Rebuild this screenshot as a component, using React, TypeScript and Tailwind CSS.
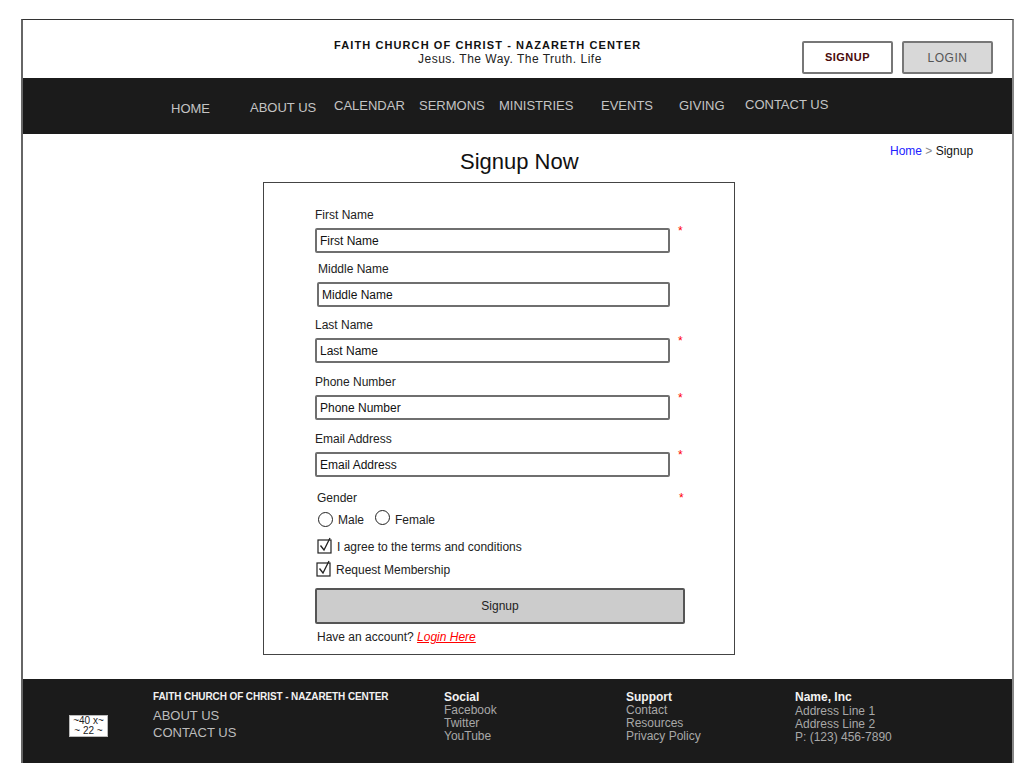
import React from "react";

const font = { fontFamily: '"Liberation Sans", Arial, sans-serif' };

function Star({ className = "" }: { className?: string }) {
  return <span className={`text-[12px] leading-none text-[#ff0000] ${className}`}>*</span>;
}

function Field({ label, labelClass, inputClass, required }: { label: string; labelClass: string; inputClass: string; required?: boolean }) {
  return (
    <div>
      <div className={`h-[14px] text-[12px] leading-[14px] text-[#222] ${labelClass}`}>{label}</div>
      <div className="mt-[6px] flex items-start">
        <div className={`flex h-[25px] items-center rounded-[2px] border-2 border-[#6f6f6f] bg-white px-[3px] text-[12px] text-[#111] ${inputClass}`}>
          {label}
        </div>
        {required && <Star className="ml-[8px] -mt-[3px]" />}
      </div>
    </div>
  );
}

function Check() {
  return (
    <svg width="16" height="17" viewBox="0 0 16 17" className="shrink-0">
      <rect x="1" y="3" width="13" height="13" fill="white" stroke="#222" strokeWidth="1.2" />
      <path d="M3.5 8.5 L7 13 L13 1" fill="none" stroke="#222" strokeWidth="1.3" />
    </svg>
  );
}

function Radio() {
  return <span className="inline-block h-[15px] w-[15px] rounded-full border border-[#222] bg-white" />;
}

export default function App() {
  return (
    <div className="min-h-[780px] bg-white pt-[19px]" style={font}>
      <div className="ml-[21px] w-[993px] border-l-2 border-r-2 border-t border-l-[#666] border-r-[#888] border-t-[#333]">
        {/* header */}
        <div className="flex h-[58px] items-start bg-white">
          <div className="w-[311px] shrink-0" />
          <div className="mt-[19px] flex w-[320px] flex-col">
            <div className="whitespace-nowrap text-[11px] font-bold leading-[13px] tracking-[1.1px] text-[#111]">FAITH CHURCH OF CHRIST - NAZARETH CENTER</div>
            <div className="ml-[84px] whitespace-nowrap text-[12px] leading-[14px] tracking-[0.5px] text-[#222]">Jesus. The Way. The Truth. Life</div>
          </div>
          <div className="ml-[148px] mt-[21px] flex gap-[9px]">
            <div className="flex h-[33px] w-[91px] items-center justify-center rounded-[2px] border-2 border-[#777] bg-white text-[11px] font-bold tracking-[0.5px] text-[#4a0a0a]">
              SIGNUP
            </div>
            <div className="flex h-[33px] w-[91px] items-center justify-center rounded-[2px] border-2 border-[#777] bg-[#d8d8d8] text-[12px] tracking-[0.5px] text-[#555]">
              LOGIN
            </div>
          </div>
        </div>

        {/* nav */}
        <div className="flex h-[56px] items-start bg-[#1b1b1b] text-[13px] leading-[15px] text-[#c4c4c4]">
          <div className="ml-[148px] mt-[23px] w-[79px]">HOME</div>
          <div className="mt-[22px] w-[84px]">ABOUT US</div>
          <div className="mt-[20px] w-[85px]">CALENDAR</div>
          <div className="mt-[20px] w-[80px]">SERMONS</div>
          <div className="mt-[20px] w-[102px]">MINISTRIES</div>
          <div className="mt-[20px] w-[78px]">EVENTS</div>
          <div className="mt-[20px] w-[66px]">GIVING</div>
          <div className="mt-[19px]">CONTACT US</div>
        </div>

        {/* body */}
        <div className="h-[545px] bg-white">
          <div className="flex h-[48px] items-start">
            <div className="ml-[437px] mt-[15px] w-[430px] text-[22px] leading-[26px] text-[#111]">Signup Now</div>
            <div className="mt-[10px] text-[12px] leading-[14px]">
              <span className="text-[#2222ff]">Home</span>
              <span className="text-[#888]"> &gt; </span>
              <span className="text-[#111]">Signup</span>
            </div>
          </div>

          <div className="ml-[240px] h-[473px] w-[472px] border border-[#444] pl-[51px] pt-[25px]">
            <Field label="First Name" labelClass="" inputClass="w-[355px]" required />
            <div className="mt-[9px]">
              <Field label="Middle Name" labelClass="ml-[3px]" inputClass="ml-[2px] w-[353px]" />
            </div>
            <div className="mt-[11px]">
              <Field label="Last Name" labelClass="" inputClass="w-[355px]" required />
            </div>
            <div className="mt-[12px]">
              <Field label="Phone Number" labelClass="" inputClass="w-[355px]" required />
            </div>
            <div className="mt-[12px]">
              <Field label="Email Address" labelClass="" inputClass="w-[355px]" required />
            </div>

            <div className="mt-[14px] flex w-[370px] items-start">
              <div className="ml-[2px] w-[362px] text-[12px] leading-[14px] text-[#222]">Gender</div>
              <Star className="mt-[1px]" />
            </div>
            <div className="mt-[5px] ml-[3px] flex items-center text-[12px] leading-[16px] text-[#222]">
              <Radio />
              <span className="ml-[5px]">Male</span>
              <span className="ml-[11px]"><Radio /></span>
              <span className="ml-[5px]">Female</span>
            </div>
            <div className="mt-[8px] ml-[2px] flex items-center gap-[4px] text-[12px] leading-[14px] text-[#222]">
              <Check />
              <span className="mt-[2px]">I agree to the terms and conditions</span>
            </div>
            <div className="mt-[6px] ml-[1px] flex items-center gap-[4px] text-[12px] leading-[14px] text-[#222]">
              <Check />
              <span className="mt-[2px]">Request Membership</span>
            </div>
            <div className="mt-[11px] flex h-[36px] w-[370px] items-center justify-center rounded-[2px] border-2 border-[#555] bg-[#cccccc] text-[12px] text-[#222]">
              Signup
            </div>
            <div className="mt-[6px] ml-[2px] text-[12px] leading-[14px] text-[#222]">
              Have an account? <span className="italic text-[#ff0000] underline">Login Here</span>
            </div>
          </div>
        </div>

        {/* footer */}
        <div className="flex h-[84px] items-start bg-[#1b1b1b]">
          <div className="ml-[46px] mt-[36px] flex h-[22px] w-[39px] flex-col items-center justify-center border border-[#bbb] bg-white text-[10px] leading-[10px] text-[#222]">
            <span>~40 x~</span>
            <span>~ 22 ~</span>
          </div>
          <div className="ml-[45px] mt-[11px] w-[291px]">
            <div className="whitespace-nowrap text-[10px] font-bold leading-[14px] tracking-[-0.1px] text-[#f2f2f2]">FAITH CHURCH OF CHRIST - NAZARETH CENTER</div>
            <div className="mt-[3px] text-[13px] leading-[17px] text-[#bdbdbd]">ABOUT US</div>
            <div className="text-[13px] leading-[17px] text-[#bdbdbd]">CONTACT US</div>
          </div>
          <div className="mt-[12px] w-[182px] text-[12px] leading-[13px]">
            <div className="font-bold text-[#f2f2f2]">Social</div>
            <div className="text-[#a8a8a8]">Facebook</div>
            <div className="text-[#a8a8a8]">Twitter</div>
            <div className="text-[#a8a8a8]">YouTube</div>
          </div>
          <div className="mt-[12px] w-[169px] text-[12px] leading-[13px]">
            <div className="font-bold text-[#f2f2f2]">Support</div>
            <div className="text-[#a8a8a8]">Contact</div>
            <div className="text-[#a8a8a8]">Resources</div>
            <div className="text-[#a8a8a8]">Privacy Policy</div>
          </div>
          <div className="mt-[12px] text-[12px] leading-[13px]">
            <div className="font-bold text-[#f2f2f2]">Name, Inc</div>
            <div className="mt-[1px] text-[#a8a8a8]">Address Line 1</div>
            <div className="text-[#a8a8a8]">Address Line 2</div>
            <div className="text-[#a8a8a8]">P: (123) 456-7890</div>
          </div>
        </div>
      </div>
    </div>
  );
}
